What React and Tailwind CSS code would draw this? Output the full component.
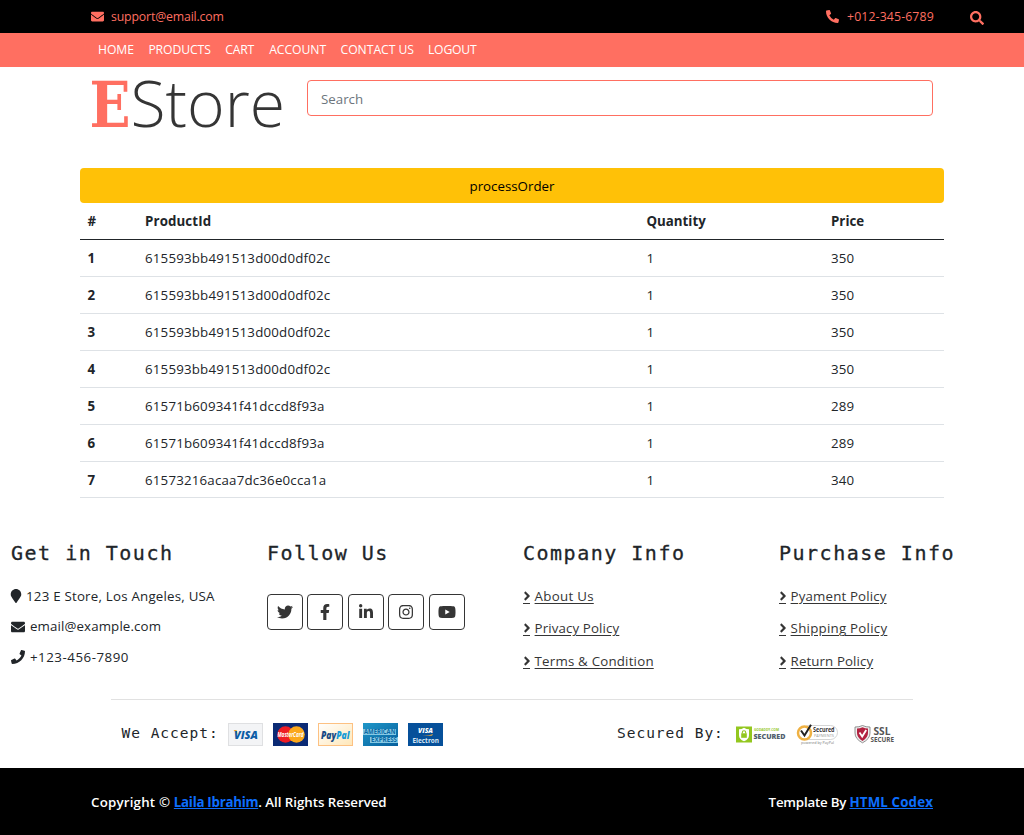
import React from "react";
import {
  FaEnvelope, FaPhoneAlt, FaPhone, FaSearch, FaMapMarker, FaTwitter,
  FaFacebookF, FaLinkedinIn, FaInstagram, FaYoutube, FaAngleRight,
} from "react-icons/fa";

const NAV = [
  ["HOME", "w-[36px] tracking-[-0.1px]"],
  ["PRODUCTS", "w-[62.5px] tracking-[-0.1px]"],
  ["CART", "w-[29.5px] tracking-[-0.2px]"],
  ["ACCOUNT", "w-[57px] tracking-[-0.05px]"],
  ["CONTACT US", "w-[73px] tracking-[-0.05px]"],
  ["LOGOUT", "w-[50px] tracking-[-0.2px]"],
];

const ROWS = [
  ["615593bb491513d00d0df02c", 350],
  ["615593bb491513d00d0df02c", 350],
  ["615593bb491513d00d0df02c", 350],
  ["615593bb491513d00d0df02c", 350],
  ["61571b609341f41dccd8f93a", 289],
  ["61571b609341f41dccd8f93a", 289],
  ["61573216acaa7dc36e0cca1a", 340],
];

function Logo() {
  return (
    <svg width="196" height="60" viewBox="0 0 196 60" className="block overflow-visible">
      <text x="-1.5" y="51" fontFamily="DejaVu Serif" fontWeight="700" fontSize="64" fill="#ff6f61" textLength="41" lengthAdjust="spacingAndGlyphs">E</text>
      <text x="39.5" y="51.3" fontFamily="Open Sans" fontWeight="300" fontSize="65" fill="#353535" textLength="154.5" lengthAdjust="spacingAndGlyphs">Store</text>
    </svg>
  );
}

function Heading({ children }) {
  return (
    <h2 className="h-[27px] whitespace-nowrap font-['DejaVu_Sans_Mono',monospace] text-[20px] leading-[27px] tracking-[1.5px] [-webkit-text-stroke:0.3px_#212529]">
      {children}
    </h2>
  );
}

function LinkColumn({ title, links }) {
  return (
    <section className="w-64 pl-[11px]">
      <Heading>{title}</Heading>
      <ul className="mt-[14px]">
        {links.map(([label, tracking]) => (
          <li key={label} className="flex h-[32.3px] items-center text-[#353535]">
            <a href="#" className="flex items-center gap-[4.6px]">
              <span className="flex h-[14px] w-[7px] items-center justify-center border-b border-[#353535]">
                <FaAngleRight size={14} className="mt-[-1px] shrink-0" />
              </span>
              <span className={`whitespace-nowrap underline underline-offset-2 ${tracking}`}>{label}</span>
            </a>
          </li>
        ))}
      </ul>
    </section>
  );
}

function Cards() {
  return (
    <div className="flex gap-[10px] tracking-normal">
      <svg width="35" height="23" viewBox="0 0 35 23">
        <rect x=".5" y=".5" width="34" height="22" fill="#f3f4f6" stroke="#dfe0e2" />
        <path d="M5.5 7h3l1.2 5z" fill="#f0a92e" />
        <text x="6" y="15.5" fontFamily="Open Sans" fontWeight="800" fontStyle="italic" fontSize="11" fill="#0d5da6" textLength="24" lengthAdjust="spacingAndGlyphs">VISA</text>
      </svg>
      <svg width="35" height="23" viewBox="0 0 35 23" className="overflow-visible">
        <rect width="35" height="23" fill="#0b2a74" />
        <circle cx="12.5" cy="11.5" r="8.3" fill="#ee1c25" />
        <circle cx="23.5" cy="11.5" r="8.3" fill="#fba81c" />
        <text x="4.5" y="14.3" fontFamily="Open Sans" fontWeight="700" fontStyle="italic" fontSize="7" fill="#fff" textLength="26" lengthAdjust="spacingAndGlyphs">MasterCard</text>
      </svg>
      <svg width="35" height="23" viewBox="0 0 35 23">
        <defs>
          <linearGradient id="pp" x1="0" y1="0" x2="1" y2="1"><stop offset="0" stopColor="#fff" /><stop offset="1" stopColor="#ffe7b8" /></linearGradient>
        </defs>
        <rect x=".5" y=".5" width="34" height="22" fill="url(#pp)" stroke="#fdc182" />
        <text x="3" y="15.5" fontFamily="Open Sans" fontWeight="800" fontStyle="italic" fontSize="10" textLength="28.5" lengthAdjust="spacingAndGlyphs" fill="#174a84">Pay<tspan fill="#159bd7">Pal</tspan></text>
      </svg>
      <svg width="35" height="23" viewBox="0 0 35 23" className="overflow-visible">
        <defs>
          <linearGradient id="ae" x1="0" y1="0" x2="1" y2="1"><stop offset="0" stopColor="#1f97c9" /><stop offset="1" stopColor="#075f9c" /></linearGradient>
        </defs>
        <rect width="35" height="23" fill="url(#ae)" />
        <rect x="0" y="6" width="33" height="6" fill="#86c9e4" />
        <rect x="7" y="14" width="28" height="6" fill="#86c9e4" />
        <text x="1" y="11.4" fontFamily="Open Sans" fontWeight="700" fontSize="6.6" fill="#0a69a5" textLength="31.5" lengthAdjust="spacingAndGlyphs">AMERICAN</text>
        <text x="8" y="19.4" fontFamily="Open Sans" fontWeight="700" fontSize="6.6" fill="#0a69a5" textLength="26" lengthAdjust="spacingAndGlyphs">EXPRESS</text>
      </svg>
      <svg width="35" height="23" viewBox="0 0 35 23" className="overflow-visible">
        <rect width="35" height="23" fill="#06509a" />
        <text x="10" y="10" fontFamily="Open Sans" fontWeight="800" fontStyle="italic" fontSize="7.5" fill="#fff" textLength="15" lengthAdjust="spacingAndGlyphs">VISA</text>
        <path d="M14 12.6q6 .6 11-1.6l-1 1.8z" fill="#e5a33a" />
        <text x="4.5" y="20" fontFamily="Open Sans" fontWeight="700" fontSize="6.5" fill="#d9e8f5" textLength="26.5" lengthAdjust="spacingAndGlyphs">Electron</text>
      </svg>
    </div>
  );
}

function Seals() {
  return (
    <div className="flex tracking-normal">
      <svg width="50" height="23" viewBox="0 0 50 23" className="overflow-visible">
        <rect y="3.5" width="16" height="16" fill="#93c71f" />
        <path d="M3 6.2q2.500 0 5-1.500 2.500 1.500 5 1.500v6q0 4-5 6-5-2-5-6z" fill="#fff" />
        <path d="M6.300 10.500v-1a1.700 1.700 0 0 1 3.400 0v1" fill="none" stroke="#93c71f" strokeWidth="1.1" />
        <rect x="5.2" y="10.3" width="5.6" height="4.5" fill="#93c71f" />
        <text x="18" y="7.8" fontFamily="Open Sans" fontWeight="700" fontSize="3.8" fill="#93c71f" textLength="25" lengthAdjust="spacingAndGlyphs">GODADDY.COM</text>
        <text x="17.5" y="15.5" fontFamily="Open Sans" fontWeight="800" fontSize="7.6" fill="#51606d" textLength="32" lengthAdjust="spacingAndGlyphs">SECURED</text>
      </svg>
      <svg width="43" height="25" viewBox="0 0 43 25" className="ml-[10px] overflow-visible">
        <rect x="6" y="2.5" width="35.5" height="14" rx="7" fill="#fff" stroke="#cacaca" strokeWidth=".8" />
        <circle cx="8.5" cy="10" r="6.5" fill="#fff" stroke="#efb143" strokeWidth="2.5" />
        <path d="M5 7.500l3.500 5L15 1.800" fill="none" stroke="#222" strokeWidth="2" />
        <text x="17" y="9.3" fontFamily="Open Sans" fontWeight="700" fontSize="6.3" fill="#333" textLength="21.5" lengthAdjust="spacingAndGlyphs">Secured</text>
        <text x="18" y="14.2" fontFamily="Open Sans" fontSize="3.8" fill="#999" textLength="20" lengthAdjust="spacingAndGlyphs">PAYMENTS</text>
        <text x="5" y="21.3" fontFamily="Open Sans" fontSize="4.2" fill="#777" textLength="33" lengthAdjust="spacingAndGlyphs">powered by PayPal</text>
      </svg>
      <svg width="42" height="23" viewBox="0 0 42 23" className="ml-[15px] overflow-visible">
        <path d="M1 4q4 .2 7.500-1.500Q12 4.200 16 4v6q0 6-7.500 9.800Q1 16 1 10z" fill="#eee" stroke="#777" strokeWidth=".8" />
        <path d="M3 5.500q3 0 5.500-1.200Q11 5.500 14 5.500V10q0 4.800-5.500 8Q3 14.800 3 10z" fill="#b22240" />
        <path d="M5.500 9.500l2.700 4 4-6.500" fill="none" stroke="#fff" strokeWidth="1.8" />
        <text x="19.5" y="12" fontFamily="Open Sans" fontWeight="700" fontSize="11" fill="#555" textLength="17" lengthAdjust="spacingAndGlyphs">SSL</text>
        <text x="16.5" y="19" fontFamily="Open Sans" fontWeight="700" fontSize="7" fill="#555" textLength="23.5" lengthAdjust="spacingAndGlyphs">SECURE</text>
      </svg>
    </div>
  );
}

export default function App() {
  return (
    <div className="flex h-[835px] w-[1024px] flex-col bg-white font-['Open_Sans',sans-serif] text-[13.3px] text-[#212529]">
      <header className="flex h-[33px] items-center bg-black text-[12.3px] text-[#ff6f61]">
        <FaEnvelope size={13} className="ml-[91px]" />
        <span className="ml-[7px] pt-px tracking-[-0.16px]">support@email.com</span>
        <FaPhoneAlt size={13} className="ml-auto" />
        <span className="ml-2 w-[87px] whitespace-nowrap pt-px tracking-[0.12px]">+012-345-6789</span>
        <FaSearch size={14} className="mt-[3px] ml-[36px] mr-[40px]" />
      </header>

      <nav className="flex h-[34px] items-center gap-[14.4px] bg-[#ff6f61] pl-[98px] text-[12.2px] text-white">
        {NAV.map(([label, style]) => (
          <a key={label} href="#" className={`whitespace-nowrap ${style}`}>{label}</a>
        ))}
      </nav>

      <div className="flex h-[101px] pl-[91px]">
        <div className="w-[216px] pt-[9px]"><Logo /></div>
        <input
          placeholder="Search"
          className="mt-[13px] h-[36px] w-[626px] rounded border border-[#ff6f61] pt-px pl-[13px] text-[13.3px] outline-none placeholder:text-[#6c757d]"
        />
      </div>

      <main className="mx-20 flex h-[330px] flex-col">
        <button className="h-[35px] shrink-0 rounded bg-[#ffc107] pt-[2px] text-[13.3px] text-black">processOrder</button>
        <table className="w-full table-fixed border-collapse text-left">
          <colgroup>
            <col className="w-[57px]" />
            <col className="w-[502px]" />
            <col className="w-[184px]" />
            <col />
          </colgroup>
          <thead>
            <tr className="h-[36px] border-b border-[#212529] font-bold">
              <th className="pt-[2px] pl-[7.5px]">#</th>
              <th className="pt-[2px] pl-2 tracking-[0.12px]">ProductId</th>
              <th className="pt-[2px] pl-[7.5px]">Quantity</th>
              <th className="pt-[2px] pl-2">Price</th>
            </tr>
          </thead>
          <tbody>
            {ROWS.map(([id, price], i) => (
              <tr key={i} className="h-[37px] border-b border-[#dee2e6] last:h-[36px] *:pt-[2px] last:*:pt-[3px]">
                <th className="pl-[7.5px] font-bold">{i + 1}</th>
                <td className="pl-2 tracking-[0.19px]">{id}</td>
                <td className="pl-[7.5px]">1</td>
                <td className="pl-2 tracking-[0.19px]">{price}</td>
              </tr>
            ))}
          </tbody>
        </table>
      </main>

      <div className="flex h-[201px] pt-[42px]">
        <section className="w-64 pl-[11px]">
          <Heading>Get in Touch</Heading>
          <div className="mt-[14px] flex h-[30.4px] items-center gap-[5px]"><FaMapMarker size={14} className="mr-[-2px] ml-[-2px]" /><span className="pt-px tracking-[0.22px]">123 E Store, Los Angeles, USA</span></div>
          <div className="flex h-[30.4px] items-center gap-[5px]"><FaEnvelope size={14} /><span className="tracking-[0.12px]">email@example.com</span></div>
          <div className="flex h-[30.4px] items-center gap-[5px]"><FaPhone size={14} /><span className="pt-px tracking-[0.52px]">+123-456-7890</span></div>
        </section>
        <section className="w-64 pl-[11px]">
          <Heading>Follow Us</Heading>
          <div className="mt-[27px] flex gap-[4.4px] text-[#353535]">
            {[FaTwitter, FaFacebookF, FaLinkedinIn, FaInstagram, FaYoutube].map((Icon, i) => (
              <a key={i} href="#" className="flex size-9 items-center justify-center rounded border border-[#353535]"><Icon size={i === 4 ? 18 : 16} /></a>
            ))}
          </div>
        </section>
        <LinkColumn title="Company Info" links={[["About Us", "tracking-[0.28px]"], ["Privacy Policy", "tracking-[0.12px]"], ["Terms & Condition", "tracking-[0.2px]"]]} />
        <LinkColumn title="Purchase Info" links={[["Pyament Policy", "tracking-[0.15px]"], ["Shipping Policy", "tracking-[0.25px]"], ["Return Policy", "tracking-[0.1px]"]]} />
      </div>

      <div className="mx-[111px] flex h-[69px] items-start border-t border-[#e1e1e1] pt-[23px] font-['DejaVu_Sans_Mono',monospace] text-[14.5px] leading-[20px] tracking-[0.98px]">
        <span className="ml-[10.5px] w-[106.5px] whitespace-nowrap">We Accept:</span>
        <Cards />
        <span className="ml-[174px] w-[119px] whitespace-nowrap">Secured By:</span>
        <Seals />
      </div>

      <footer className="flex h-[67px] items-center justify-between bg-black px-[91px] pt-[3px] text-[13.3px] font-semibold text-white">
        <p><span className="tracking-[0.2px]">Copyright © </span><a href="#" className="font-bold tracking-[-0.27px] text-[#0d6efd] underline">Laila Ibrahim</a><span className="tracking-[-0.03px]">. All Rights Reserved</span></p>
        <p><span className="tracking-[-0.2px]">Template By </span><a href="#" className="font-bold tracking-[0.15px] text-[#0d6efd] underline">HTML Codex</a></p>
      </footer>
    </div>
  );
}
